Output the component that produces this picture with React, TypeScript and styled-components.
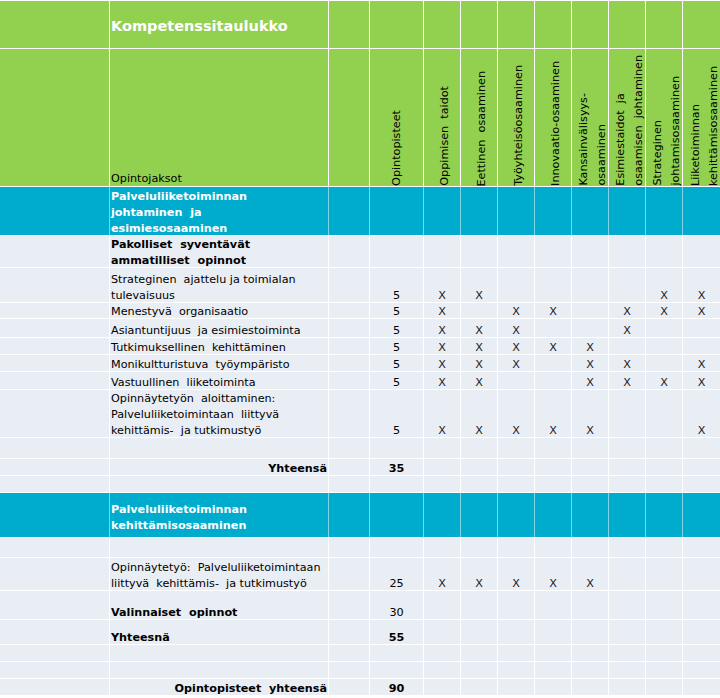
import React from 'react';
import styled, { createGlobalStyle, css } from 'styled-components';

const GREEN = '#92d050';
const CYAN = '#00accd';
const LIGHT = '#e9edf4';

const GlobalStyle = createGlobalStyle`
  html, body { margin: 0; padding: 0; background: #ffffff; }
  body {
    font-family: "DejaVu Sans", Verdana, "Liberation Sans", sans-serif;
    font-size: 11.2px;
    color: #000000;
  }
`;

const COLUMN_TRACKS = [109, 218, 40, 53, 36, 36, 36, 36, 36, 36, 36, 37];

type Tone = 'green' | 'cyan' | 'light';
type Axis = 'start' | 'center' | 'end';

const toneBg: Record<Tone, string> = { green: GREEN, cyan: CYAN, light: LIGHT };
const flexPos: Record<Axis, string> = { start: 'flex-start', center: 'center', end: 'flex-end' };

const Sheet = styled.div<{ $rows: number[] }>`
  display: grid;
  grid-template-columns: ${COLUMN_TRACKS.map((w) => `${w}px`).join(' ')};
  grid-template-rows: ${(p) => p.$rows.map((h) => `${h}px`).join(' ')};
  gap: 1px;
  padding-top: 1px;
  width: 720px;
  background: #ffffff;
`;

const Cell = styled.div<{ $tone: Tone; $x?: Axis; $y?: Axis; $inset?: number; $pb?: number }>`
  display: flex;
  min-width: 0;
  min-height: 0;
  background: ${(p) => toneBg[p.$tone]};
  justify-content: ${(p) => flexPos[p.$x ?? 'start']};
  align-items: ${(p) => flexPos[p.$y ?? 'end']};
  padding-left: ${(p) => p.$inset ?? 0}px;
  padding-bottom: ${(p) => p.$pb ?? 0}px;
  ${(p) =>
    p.$tone === 'cyan' &&
    css`
      box-shadow: -1px 0 0 rgba(0, 172, 205, 0.5);
    `}
`;

const Title = styled.h1`
  margin: 0;
  padding: 3px 0 0 1px;
  font-size: 14.5px;
  font-weight: 700;
  color: #ffffff;
  white-space: nowrap;
`;

const ColumnCaption = styled.span`
  display: block;
  padding-left: 1px;
  line-height: 16px;
  margin-bottom: -1px;
  white-space: pre;
`;

const Vertical = styled.span`
  display: block;
  writing-mode: vertical-rl;
  transform: rotate(180deg);
  white-space: pre;
  line-height: 18px;
`;

const SectionTitle = styled.span`
  display: block;
  padding-left: 1px;
  line-height: 16px;
  font-weight: 700;
  color: #ffffff;
  white-space: pre;
`;

const CourseText = styled.span<{ $bold?: boolean }>`
  display: block;
  padding: 0 1px;
  line-height: 16px;
  margin-bottom: -2px;
  font-weight: ${(p) => (p.$bold ? 700 : 400)};
  white-space: pre;
`;

const Figure = styled.span<{ $bold?: boolean }>`
  display: block;
  line-height: 16px;
  margin-bottom: -2px;
  font-weight: ${(p) => (p.$bold ? 700 : 400)};
`;

const Mark = styled.span`
  display: block;
  line-height: 16px;
  margin-bottom: -2px;
  color: #222222;
`;

type TitleRow = { kind: 'title'; h: number; text: string };
type HeaderRow = { kind: 'header'; h: number };
type SectionRow = { kind: 'section'; h: number; lines: string[]; y: Axis; pb: number };
type CourseRow = {
  kind: 'body';
  h: number;
  lines?: string[];
  bold?: boolean;
  right?: boolean;
  points?: string;
  pointsBold?: boolean;
  marks?: string;
};
type Row = TitleRow | HeaderRow | SectionRow | CourseRow;

const COMPETENCES: { lines: string[]; inset: number }[] = [
  { lines: ['Opintopisteet'], inset: 0 },
  { lines: ['Oppimisen  taidot'], inset: 6 },
  { lines: ['Eettinen  osaaminen'], inset: 6 },
  { lines: ['Työyhteisöosaaminen'], inset: 6 },
  { lines: ['Innovaatio-osaaminen'], inset: 6 },
  { lines: ['Kansainvälisyys-', 'osaaminen'], inset: 6 },
  { lines: ['Esimiestaidot  ja', 'osaamisen  johtaminen'], inset: 6 },
  { lines: ['Strateginen', 'johtamisosaaminen'], inset: 6 },
  { lines: ['Liiketoiminnan', 'kehittämisosaaminen'], inset: 6 },
];

const ROWS: Row[] = [
  { kind: 'title', h: 47, text: 'Kompetenssitaulukko' },
  { kind: 'header', h: 137 },
  { kind: 'section', h: 48, lines: ['Palveluliiketoiminnan', 'johtaminen  ja', 'esimiesosaaminen'], y: 'end', pb: -2 },
  { kind: 'body', h: 31, lines: ['Pakolliset  syventävät', 'ammatilliset  opinnot'], bold: true },
  { kind: 'body', h: 34, lines: ['Strateginen  ajattelu ja toimialan', 'tulevaisuus'], points: '5', marks: 'XX....XX' },
  { kind: 'body', h: 15, lines: ['Menestyvä  organisaatio'], points: '5', marks: 'X.XX.XXX' },
  { kind: 'body', h: 18, lines: ['Asiantuntijuus  ja esimiestoiminta'], points: '5', marks: 'XXX..X..' },
  { kind: 'body', h: 16, lines: ['Tutkimuksellinen  kehittäminen'], points: '5', marks: 'XXXXX...' },
  { kind: 'body', h: 16, lines: ['Monikultturistuva  työympäristo'], points: '5', marks: 'XXX.XX.X' },
  { kind: 'body', h: 17, lines: ['Vastuullinen  liiketoiminta'], points: '5', marks: 'XX..XXXX' },
  {
    kind: 'body',
    h: 47,
    lines: ['Opinnäytetyön  aloittaminen:', 'Palveluliiketoimintaan  liittyvä', 'kehittämis-  ja tutkimustyö'],
    points: '5',
    marks: 'XXXXX..X',
  },
  { kind: 'body', h: 20 },
  { kind: 'body', h: 16, lines: ['Yhteensä'], bold: true, right: true, points: '35', pointsBold: true },
  { kind: 'body', h: 16 },
  { kind: 'section', h: 44, lines: ['Palveluliiketoiminnan', 'kehittämisosaaminen'], y: 'end', pb: 3 },
  { kind: 'body', h: 19 },
  {
    kind: 'body',
    h: 32,
    lines: ['Opinnäytetyö:  Palveluliiketoimintaan', 'liittyvä  kehittämis-  ja tutkimustyö'],
    points: '25',
    marks: 'XXXXX...',
  },
  { kind: 'body', h: 28, lines: ['Valinnaiset  opinnot'], bold: true, points: '30' },
  { kind: 'body', h: 24, lines: ['Yhteesnä'], bold: true, points: '55', pointsBold: true },
  { kind: 'body', h: 16 },
  { kind: 'body', h: 16 },
  { kind: 'body', h: 16, lines: ['Opintopisteet  yhteensä'], bold: true, right: true, points: '90', pointsBold: true },
];

function renderRow(row: Row, r: number): React.ReactNode[] {
  const key = (c: number) => `${r}-${c}`;
  if (row.kind === 'title') {
    return COLUMN_TRACKS.map((_, c) => (
      <Cell key={key(c)} $tone="green" $y="center">
        {c === 1 && <Title>{row.text}</Title>}
      </Cell>
    ));
  }
  if (row.kind === 'header') {
    return COLUMN_TRACKS.map((_, c) => {
      if (c === 1) {
        return (
          <Cell key={key(c)} $tone="green">
            <ColumnCaption>Opintojaksot</ColumnCaption>
          </Cell>
        );
      }
      if (c >= 3) {
        const comp = COMPETENCES[c - 3];
        return (
          <Cell key={key(c)} $tone="green" $x="center" $inset={comp.inset}>
            <Vertical>{comp.lines.join('\n')}</Vertical>
          </Cell>
        );
      }
      return <Cell key={key(c)} $tone="green" />;
    });
  }
  if (row.kind === 'section') {
    return COLUMN_TRACKS.map((_, c) => (
      <Cell key={key(c)} $tone="cyan" $y={row.y} $pb={row.pb > 0 ? row.pb : 0}>
        {c === 1 && (
          <SectionTitle style={row.pb < 0 ? { marginBottom: row.pb } : undefined}>{row.lines.join('\n')}</SectionTitle>
        )}
      </Cell>
    ));
  }
  return COLUMN_TRACKS.map((_, c) => {
    if (c === 1) {
      return (
        <Cell key={key(c)} $tone="light" $x={row.right ? 'end' : 'start'}>
          {row.lines && <CourseText $bold={row.bold}>{row.lines.join('\n')}</CourseText>}
        </Cell>
      );
    }
    if (c === 3) {
      return (
        <Cell key={key(c)} $tone="light" $x="center">
          {row.points && <Figure $bold={row.pointsBold}>{row.points}</Figure>}
        </Cell>
      );
    }
    if (c >= 4) {
      const has = row.marks && row.marks[c - 4] === 'X';
      return (
        <Cell key={key(c)} $tone="light" $x="center">
          {has && <Mark>X</Mark>}
        </Cell>
      );
    }
    return <Cell key={key(c)} $tone="light" />;
  });
}

export default function App() {
  return (
    <>
      <GlobalStyle />
      <Sheet $rows={ROWS.map((r) => r.h)}>{ROWS.flatMap((row, r) => renderRow(row, r))}</Sheet>
    </>
  );
}
